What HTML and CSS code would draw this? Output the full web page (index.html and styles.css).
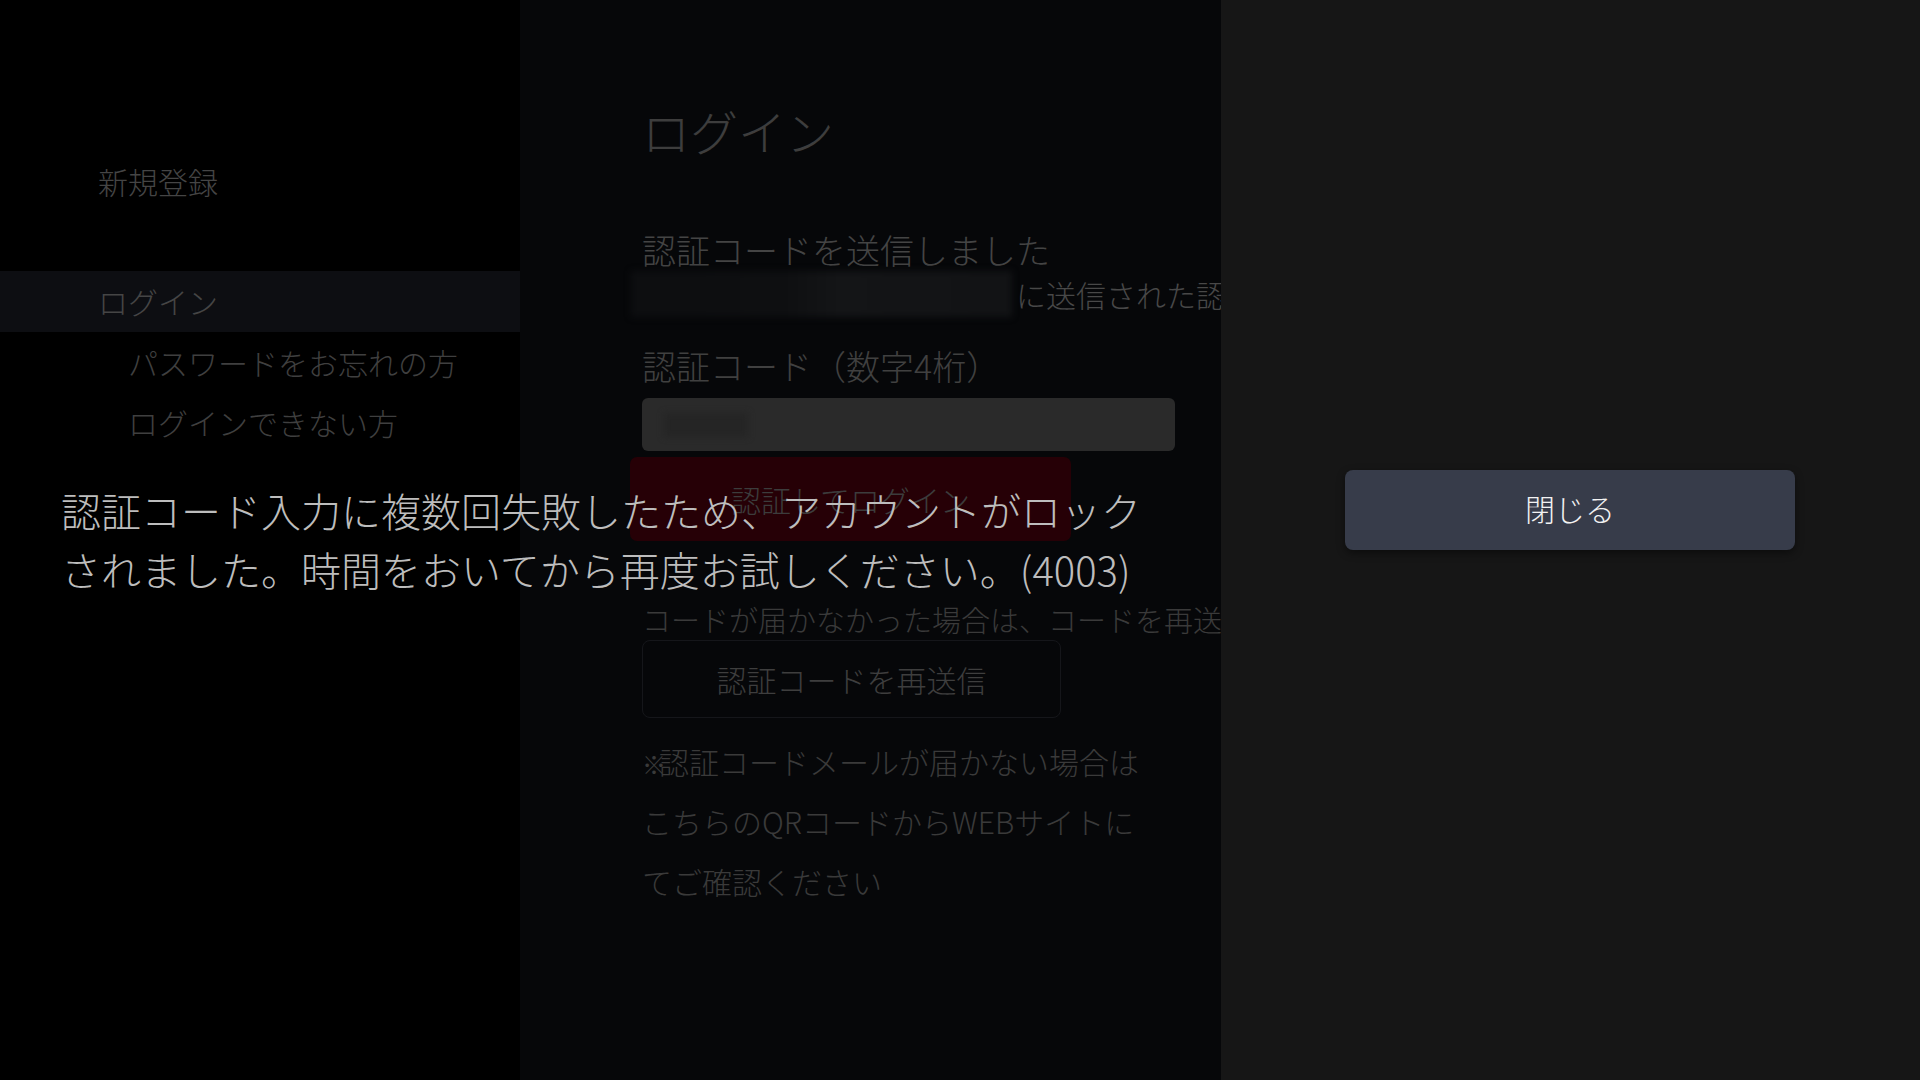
FILE: index.html
```html
<!DOCTYPE html>
<html lang="ja">
<head>
<meta charset="utf-8">
<title>ログイン</title>
<link rel="stylesheet" href="styles.css">
</head>
<body>
<div class="page">
  <nav class="sidebar">
    <div class="nav-item nav-top">新規登録</div>
    <div class="nav-item nav-active">ログイン</div>
    <div class="nav-item nav-sub">パスワードをお忘れの方</div>
    <div class="nav-item nav-sub">ログインできない方</div>
  </nav>
  <main class="main">
    <h1 class="title">ログイン</h1>
    <div class="sent-title">認証コードを送信しました</div>
    <div class="email-row">
      <div class="email-blur"></div>
      <span class="email-text">に送信された認証コードを入力してください</span>
    </div>
    <div class="label">認証コード（数字4桁）</div>
    <div class="input"><div class="input-blur"></div></div>
    <div class="btn-login">認証してログイン</div>
    <div class="hint">コードが届かなかった場合は、コードを再送信してください</div>
    <div class="btn-resend">認証コードを再送信</div>
    <p class="note"><span class="mark">※</span>認証コードメールが届かない場合は<br>こちらのQRコードからWEBサイトに<br>てご確認ください</p>
  </main>
</div>
<div class="dialog">
  <div class="guidance">
    <p class="message">認証コード入力に複数回失敗したため、アカウントがロックされました。時間をおいてから再度お試しください。(4003)</p>
  </div>
  <div class="actions">
    <div class="btn-close">閉じる</div>
  </div>
</div>
</body>
</html>
```
FILE: styles.css
```css
* { box-sizing: border-box; }
html, body {
  margin: 0;
  padding: 0;
  width: 1920px;
  height: 1080px;
  overflow: hidden;
  background: #060709;
  font-family: "Noto Sans CJK JP", "Noto Sans", sans-serif;
  font-weight: 300;
}
.page {
  display: flex;
  width: 1920px;
  height: 1080px;
}
.sidebar {
  width: 520px;
  flex: none;
  background: #000;
  padding-top: 151px;
}
.nav-item {
  height: 60px;
  line-height: 60px;
  font-size: 30px;
  color: #454545;
  padding-left: 98px;
  white-space: nowrap;
}
.nav-top { margin-bottom: 60px; }
.nav-active {
  height: 61px;
  line-height: 61px;
  background: #0d0e12;
  margin-bottom: 0;
}
.nav-sub { padding-left: 128px; color: #3f3f3f; }

.main {
  flex: 1;
  background: #060709;
  padding: 100px 0 0 122px;
  color: #434343;
  overflow: hidden;
}
.title {
  margin: 0;
  font-size: 48px;
  font-weight: 300;
  line-height: 60px;
  color: #3d3d3d;
}
.sent-title {
  margin-top: 68px;
  font-size: 34px;
  line-height: 44px;
  color: #444;
}
.email-row {
  display: flex;
  align-items: center;
  height: 44px;
  white-space: nowrap;
}
.email-blur {
  width: 381px;
  height: 46px;
  margin-left: -11px;
  flex: none;
  background: linear-gradient(90deg, #0d0e10 0%, #0e0f11 40%, #141517 55%, #121315 100%);
  filter: blur(3px);
}
.email-text {
  font-size: 30px;
  color: #484848;
  margin-left: 4px;
}
.label {
  margin-top: 28px;
  font-size: 34px;
  line-height: 44px;
  color: #404040;
}
.input {
  margin-top: 10px;
  width: 533px;
  height: 53px;
  background: #2a2a2a;
  border-radius: 6px;
  padding: 15px 0 0 22px;
}
.input-blur {
  width: 84px;
  height: 24px;
  background: #252525;
  filter: blur(3px);
}
.btn-login {
  margin: 6px 0 0 -12px;
  width: 441px;
  height: 84px;
  background: #260006;
  border-radius: 7px;
  font-size: 30px;
  line-height: 84px;
  text-align: center;
  color: #3c3c3c;
}
.hint {
  margin-top: 58px;
  font-size: 29px;
  line-height: 40px;
  color: #3a3a3a;
  white-space: nowrap;
}
.btn-resend {
  margin-top: 1px;
  width: 419px;
  height: 78px;
  border: 1px solid #15161a;
  border-radius: 8px;
  font-size: 30px;
  line-height: 76px;
  text-align: center;
  color: #3e3e3e;
}
.note {
  margin: 13px 0 0;
  font-size: 30px;
  line-height: 60px;
  color: #3a3a3a;
}
.mark { letter-spacing: -7px; font-size: 24px; line-height: 1; }

.dialog {
  position: absolute;
  top: 0;
  left: 0;
  width: 1920px;
  height: 1080px;
  display: flex;
}
.guidance {
  width: 1221px;
  flex: none;
  display: flex;
  align-items: center;
  padding: 0 60px 0 61px;
}
.message {
  margin: 0;
  width: 1100px;
  font-size: 40px;
  line-height: 59px;
  color: #bdbdbd;
}
.actions {
  flex: 1;
  background: #161616;
  padding: 470px 125px 0 124px;
}
.btn-close {
  width: 450px;
  height: 80px;
  background: #373c4a;
  border-radius: 8px;
  box-shadow: 0 3px 8px rgba(0, 0, 0, 0.45);
  color: #f2f2f2;
  font-size: 30px;
  line-height: 77px;
  text-align: center;
}
```
